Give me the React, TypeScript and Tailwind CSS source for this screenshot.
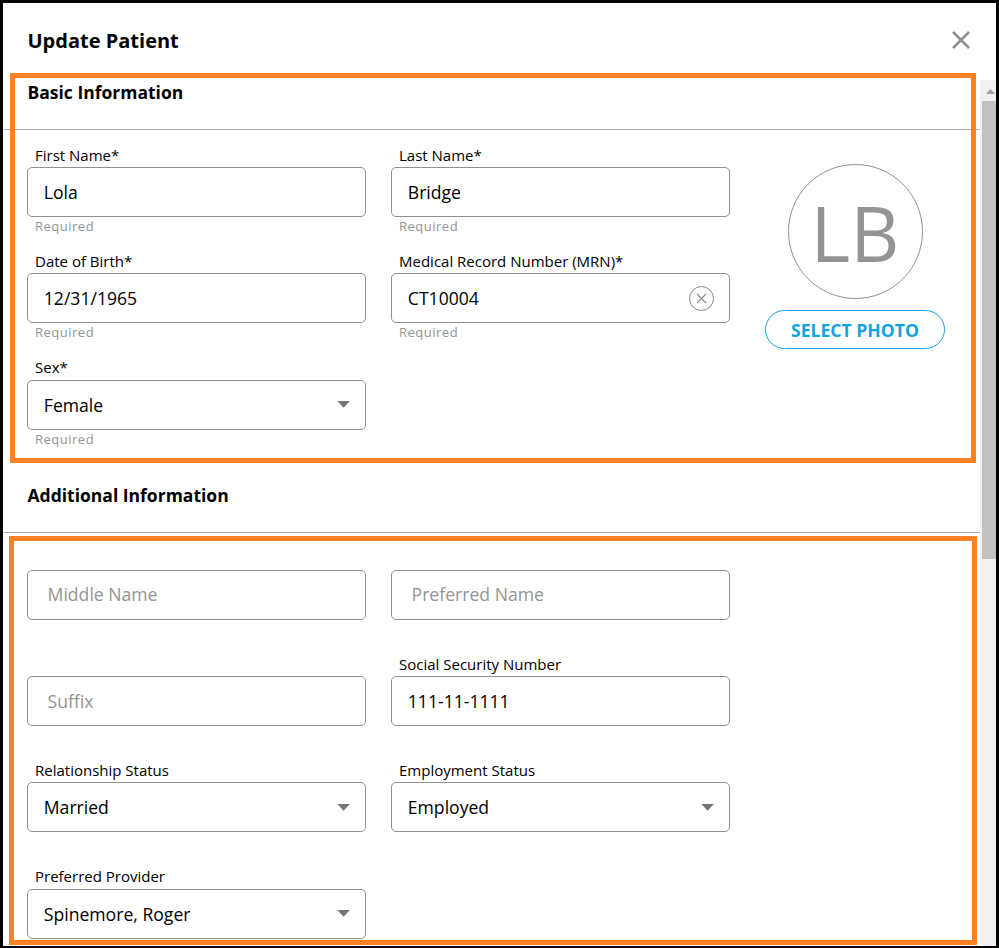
import React from "react";

type FieldProps = {
  label?: string;
  value?: string;
  placeholder?: string;
  helper?: string;
  kind?: "text" | "select" | "clearable";
};

function Caret() {
  return (
    <svg width="14" height="7" viewBox="0 0 14 7" className="-mr-px" aria-hidden="true">
      <path d="M0.3 0H12.9L6.6 6.8Z" fill="#757575" />
    </svg>
  );
}

function ClearIcon() {
  return (
    <svg width="26" height="26" viewBox="0 0 26 26" fill="none" stroke="#8a8a8a" className="mt-px" aria-hidden="true">
      <circle cx="13.5" cy="12.5" r="12" />
      <path d="M9 8L18 17M18 8L9 17" strokeWidth="1.1" />
    </svg>
  );
}

function Field({ label, value, placeholder, helper, kind = "text" }: FieldProps) {
  return (
    <div className="h-[106.33px] w-[339px]">
      <div className="flex h-6 items-center pb-[0.5px] pl-2 text-[15px] leading-6 whitespace-nowrap">
        {label && <span>{label}</span>}
      </div>
      <div className="flex h-[50px] items-center justify-between rounded-[5px] border border-[#919191] pr-[15px] pl-[15.8px] text-[17.6px]">
        {value && <span className="pt-[0.5px]">{value}</span>}
        {placeholder && <span className="pl-[3.8px] text-[#949494]">{placeholder}</span>}
        {kind === "select" && <Caret />}
        {kind === "clearable" && <ClearIcon />}
      </div>
      {helper && (
        <div className="pl-2 text-[13px] leading-[19px] tracking-[0.5px] text-[#949494]">{helper}</div>
      )}
    </div>
  );
}

function Scrollbar() {
  return (
    <div className="flex w-4 flex-col rounded-bl-[5px] bg-[#f0f0f0]">
      <div className="flex h-[21px] items-end justify-end pr-px pb-[7px]">
        <svg width="9" height="5" viewBox="0 0 9 5" aria-hidden="true">
          <path d="M4.5 0L9 5H0Z" fill="#a0a0a0" />
        </svg>
      </div>
      <div className="ml-0.5 h-[458px] bg-[#c1c1c1]" />
    </div>
  );
}

export default function App() {
  return (
    <div className="relative flex h-[948px] w-[999px] flex-col overflow-hidden border-x-[3px] border-t-[3px] border-b-2 border-black bg-white font-['Open_Sans',sans-serif] text-black">
      <header className="flex h-[77px] shrink-0 items-start justify-between pt-6 pr-[25px] pl-[24.5px]">
        <h1 className="text-[20px] leading-7 font-bold">Update Patient</h1>
        <svg width="20" height="20" viewBox="0 0 20 20" className="mt-[3px]" aria-hidden="true">
          <path d="M2 2L18 18M18 2L2 18" stroke="#8f8f8f" strokeWidth="2.6" fill="none" />
        </svg>
      </header>

      <div className="flex min-h-0 flex-1">
        <main className="w-[977px]">
          <section>
            <div className="h-[50px] border-b border-[#b0b0b0] pl-[24.5px]">
              <h2 className="text-[17.5px] leading-6 font-bold">Basic Information</h2>
            </div>
            <div className="flex pt-[12.9px] pl-6">
              <div className="grid grid-cols-[339px_339px] content-start gap-x-[25px]">
                <Field label="First Name*" value="Lola" helper="Required" />
                <Field label="Last Name*" value="Bridge" helper="Required" />
                <Field label="Date of Birth*" value="12/31/1965" helper="Required" />
                <Field label="Medical Record Number (MRN)*" value="CT10004" helper="Required" kind="clearable" />
                <Field label="Sex*" value="Female" helper="Required" kind="select" />
              </div>
              <div className="ml-[35px] flex w-[180px] flex-col items-center pt-[21.1px]">
                <div className="flex h-[135px] w-[135px] items-center justify-center rounded-full border border-[#919191] text-[76px] leading-none text-[#949494]">
                  <span className="pt-[3px]">LB</span>
                </div>
                <button className="mt-[11px] h-[39px] w-[180px] rounded-full border border-[#12a5dc] pt-px text-[17.6px] font-bold text-[#12a5dc]">
                  SELECT PHOTO
                </button>
              </div>
            </div>
          </section>

          <section className="pt-[21px]">
            <div className="h-[50px] border-b border-[#b0b0b0] pl-[24.5px]">
              <h2 className="text-[17.5px] leading-6 font-bold">Additional Information</h2>
            </div>
            <div className="grid grid-cols-[339px_339px] gap-x-[25px] pt-[12.7px] pl-6">
              <Field placeholder="Middle Name" />
              <Field placeholder="Preferred Name" />
              <Field placeholder="Suffix" />
              <Field label="Social Security Number" value="111-11-1111" />
              <Field label="Relationship Status" value="Married" kind="select" />
              <Field label="Employment Status" value="Employed" kind="select" />
              <Field label="Preferred Provider" value="Spinemore, Roger" kind="select" />
            </div>
          </section>
        </main>
        <Scrollbar />
      </div>

      <div className="pointer-events-none absolute top-[70px] left-[7px] h-[390px] w-[966px] border-[5px] border-[#ff8126]" />
      <div className="pointer-events-none absolute top-[533px] left-[6px] h-[409px] w-[968px] border-[5px] border-[#ff8126]" />
    </div>
  );
}
